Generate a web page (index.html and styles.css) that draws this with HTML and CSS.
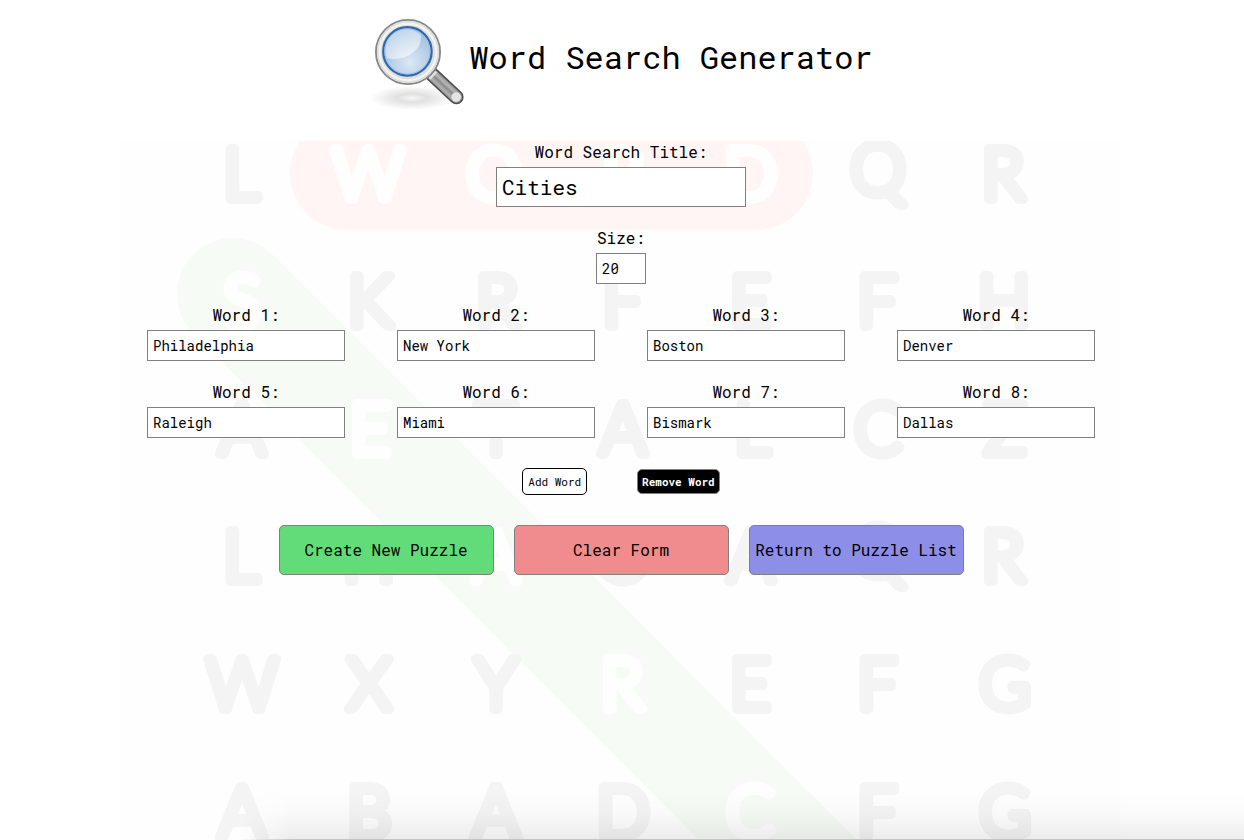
FILE: index.html
```
<!DOCTYPE html>
<html lang="en">
<head>
<meta charset="UTF-8">
<meta name="viewport" content="width=device-width, initial-scale=1.0">
<title>Word Search Generator</title>
<link rel="stylesheet" href="styles.css">
</head>
<body>
<header class="header">
  <svg class="logo" viewBox="-1 0 96 96" aria-hidden="true">
    <defs>
      <radialGradient id="shadow">
        <stop offset="0" stop-color="#000" stop-opacity="0.03"/>
        <stop offset="0.35" stop-color="#000" stop-opacity="0.12"/>
        <stop offset="1" stop-color="#000" stop-opacity="0"/>
      </radialGradient>
      <radialGradient id="glass" cx="0.55" cy="0.72" r="0.75">
        <stop offset="0" stop-color="#dce8f5"/>
        <stop offset="1" stop-color="#94b8dc"/>
      </radialGradient>
      <linearGradient id="shine" x1="0" y1="0" x2="0.8" y2="1">
        <stop offset="0" stop-color="#fff" stop-opacity="0.3"/>
        <stop offset="1" stop-color="#fff" stop-opacity="0.6"/>
      </linearGradient>
      <linearGradient id="handle" x1="0" y1="0" x2="0" y2="1">
        <stop offset="0" stop-color="#8a8a8a"/>
        <stop offset="0.3" stop-color="#b8b8b8"/>
        <stop offset="0.5" stop-color="#8c8c8c"/>
        <stop offset="0.75" stop-color="#b0b0b0"/>
        <stop offset="1" stop-color="#909090"/>
      </linearGradient>
    </defs>
    <ellipse cx="42" cy="84" rx="42" ry="12" fill="url(#shadow)"/>
    <g transform="translate(38 38) rotate(43)">
      <path d="M32 -6.5h34a6.5 6.5 0 0 1 0 13h-34z" fill="url(#handle)" stroke="#4c4c4c" stroke-width="1.6"/>
      <path d="M34 -5v10" stroke="#e0e0e0" stroke-width="3"/>
      <circle cx="66" cy="0" r="4.8" fill="#e4e4e4"/>
    </g>
    <circle cx="38" cy="38" r="28.8" fill="none" stroke="#858585" stroke-width="8.4"/>
    <circle cx="38" cy="38" r="28" fill="none" stroke="#f4f4f2" stroke-width="6.4"/>
    <circle cx="38" cy="38" r="30.2" fill="none" stroke="#dcdcda" stroke-width="1.6"/>
    <circle cx="38" cy="38" r="26.2" fill="none" stroke="#dededc" stroke-width="2"/>
    <circle cx="37.4" cy="37.4" r="24.2" fill="url(#glass)" stroke="#2f68ac" stroke-width="2.2"/>
    <circle cx="37.4" cy="37.4" r="22.6" fill="none" stroke="#9dbfe2" stroke-width="1"/>
    <path d="M17 44A21 21 0 0 1 51 21Q52 33 41 40Q30 47 17 44Z" fill="url(#shine)"/>
  </svg>
  <h1>Word Search Generator</h1>
</header>
<main>
  <!-- faded letter grid behind the form -->
  <svg class="backdrop" width="1000" height="700" viewBox="0 0 1000 700" aria-hidden="true">
    <rect class="pill-red" x="169" y="-25" width="523" height="114" rx="57"/>
    <path class="pill-green" d="M112 153L812 854"/>
    <g class="letters">
      <text x="120" y="58">L</text>
      <text x="757" y="53">Q</text>
      <text x="882" y="58">R</text>

      <text x="249" y="185">K</text>
      <text x="376" y="185">R</text>
      <text x="501" y="185">F</text>
      <text x="629" y="185">E</text>
      <text x="756" y="185">F</text>
      <text x="883" y="185">H</text>

      <text x="121" y="313">A</text>
      <text x="375" y="313">T</text>
      <text x="502" y="313">A</text>
      <text x="631" y="313">L</text>
      <text x="757" y="313">C</text>
      <text x="884" y="313">Z</text>

      <text x="120" y="440">L</text>
      <text x="248" y="440">H</text>
      <text x="502" y="440">O</text>
      <text x="630" y="440">A</text>
      <text x="757" y="435">Q</text>
      <text x="882" y="440">R</text>

      <text x="121" y="568">W</text>
      <text x="248" y="568">X</text>
      <text x="375" y="568">Y</text>
      <text x="629" y="568">E</text>
      <text x="756" y="568">F</text>
      <text x="884" y="568">G</text>

      <text x="121" y="696">A</text>
      <text x="248" y="696">B</text>
      <text x="375" y="696">A</text>
      <text x="502" y="696">D</text>
      <text x="756" y="696">F</text>
      <text x="884" y="696">G</text>
    </g>
    <g class="letters found">
      <text x="247" y="58">W</text>
      <text x="373" y="58">O</text>
      <text x="502" y="58">R</text>
      <text x="629" y="58">D</text>
      <text x="121" y="185">S</text>
      <text x="249" y="313">E</text>
      <text x="375" y="440">A</text>
      <text x="501" y="568">R</text>
      <text x="629" y="696">C</text>
    </g>
  </svg>

  <form class="puzzle-form">
    <div class="field">
      <label for="title">Word Search Title:</label>
      <input type="text" id="title" class="title-input" value="Cities">
    </div>
    <div class="field">
      <label for="size">Size:</label>
      <input type="text" id="size" class="size-input" value="20">
    </div>
    <div class="words">
      <div class="field">
        <label for="word1">Word 1:</label>
        <input type="text" id="word1" value="Philadelphia">
      </div>
      <div class="field">
        <label for="word2">Word 2:</label>
        <input type="text" id="word2" value="New York">
      </div>
      <div class="field">
        <label for="word3">Word 3:</label>
        <input type="text" id="word3" value="Boston">
      </div>
      <div class="field">
        <label for="word4">Word 4:</label>
        <input type="text" id="word4" value="Denver">
      </div>
      <div class="field">
        <label for="word5">Word 5:</label>
        <input type="text" id="word5" value="Raleigh">
      </div>
      <div class="field">
        <label for="word6">Word 6:</label>
        <input type="text" id="word6" value="Miami">
      </div>
      <div class="field">
        <label for="word7">Word 7:</label>
        <input type="text" id="word7" value="Bismark">
      </div>
      <div class="field">
        <label for="word8">Word 8:</label>
        <input type="text" id="word8" value="Dallas">
      </div>
    </div>
    <div class="word-buttons">
      <button type="button" class="small-button add">Add Word</button>
      <button type="button" class="small-button remove">Remove Word</button>
    </div>
    <div class="form-buttons">
      <button type="submit" class="big-button create">Create New Puzzle</button>
      <button type="reset" class="big-button clear">Clear Form</button>
      <button type="button" class="big-button return">Return to Puzzle List</button>
    </div>
  </form>
</main>
<div class="bottom-shade"></div>
</body>
</html>
```

FILE: styles.css
```
* {
  box-sizing: border-box;
}
body {
  margin: 0;
  padding-right: 2px;
  min-height: 100vh;
  display: flex;
  flex-direction: column;
  font-family: "Roboto Mono", "DejaVu Sans Mono", monospace;
  font-size: 16px;
  color: #000;
  background-color: #fff;
}
.header {
  display: flex;
  justify-content: center;
  align-items: flex-start;
  gap: 4px;
  padding: 14px 0 31px;
}
.logo {
  width: 96px;
  height: 96px;
}
h1 {
  margin: 0;
  font-size: 32px;
  font-weight: 400;
  line-height: 85px;
}
main {
  position: relative;
  flex: 1;
  overflow: hidden;
}

/* letter grid */
.backdrop {
  position: absolute;
  top: 0;
  left: 50%;
  margin-left: -500px;
  background-color: #fefefe;
}
.pill-red {
  fill: #fff5f5;
}
.pill-green {
  stroke: #f7fbf5;
  stroke-width: 112px;
  stroke-linecap: round;
}
.letters {
  font-family: Lato, sans-serif;
  font-size: 70px;
  font-weight: 300;
  text-anchor: middle;
  fill: #f4f4f4;
  stroke: #f4f4f4;
  stroke-width: 10px;
  stroke-linejoin: round;
}
.found {
  fill: #fefefe;
  stroke: #fefefe;
}

/* form */
.puzzle-form {
  position: relative;
  max-width: 1000px;
  margin: 0 auto;
  display: flex;
  flex-direction: column;
  align-items: center;
  gap: 20px;
}
.field {
  display: flex;
  flex-direction: column;
  align-items: center;
  gap: 4px;
}
label {
  line-height: 22px;
}
input {
  width: 198px;
  height: 31px;
  padding: 0 5px;
  border: 1px solid #808080;
  background-color: #fff;
  color: #000;
  font-family: inherit;
  font-size: 14px;
}
.title-input {
  width: 250px;
  height: 40px;
  font-size: 21px;
}
.size-input {
  width: 50px;
}
.words {
  width: 100%;
  display: grid;
  grid-template-columns: repeat(4, 1fr);
  row-gap: 20px;
}
.word-buttons {
  display: flex;
  align-items: center;
  gap: 50px;
  margin: 10px 0;
}
.form-buttons {
  display: flex;
  gap: 20px;
}
button {
  padding: 0 5px;
  border: 1px solid #808080;
  border-radius: 5px;
  color: #000;
  font-family: inherit;
  cursor: pointer;
}
.small-button {
  font-size: 11px;
}
.add {
  height: 27px;
  border-color: #000;
  background-color: #fff;
}
.remove {
  height: 25px;
  padding: 0 4px;
  background-color: #000;
  color: #fff;
  font-weight: 700;
}
.big-button {
  width: 215px;
  height: 50px;
  padding-bottom: 2px;
  font-size: 16px;
}
.create {
  background-color: #62dc78;
}
.clear {
  background-color: #f08c8e;
}
.return {
  background-color: #8c8ee8;
}

.bottom-shade {
  position: fixed;
  left: 240px;
  right: 0;
  bottom: 0;
  height: 50px;
  border-bottom: 1px solid #c4c4c4;
  background: linear-gradient(rgba(0, 0, 0, 0), rgba(0, 0, 0, 0.02) 50%, rgba(0, 0, 0, 0.07));
  -webkit-mask-image: linear-gradient(to right, transparent, #000 50px);
  mask-image: linear-gradient(to right, transparent, #000 50px);
  pointer-events: none;
}
```
